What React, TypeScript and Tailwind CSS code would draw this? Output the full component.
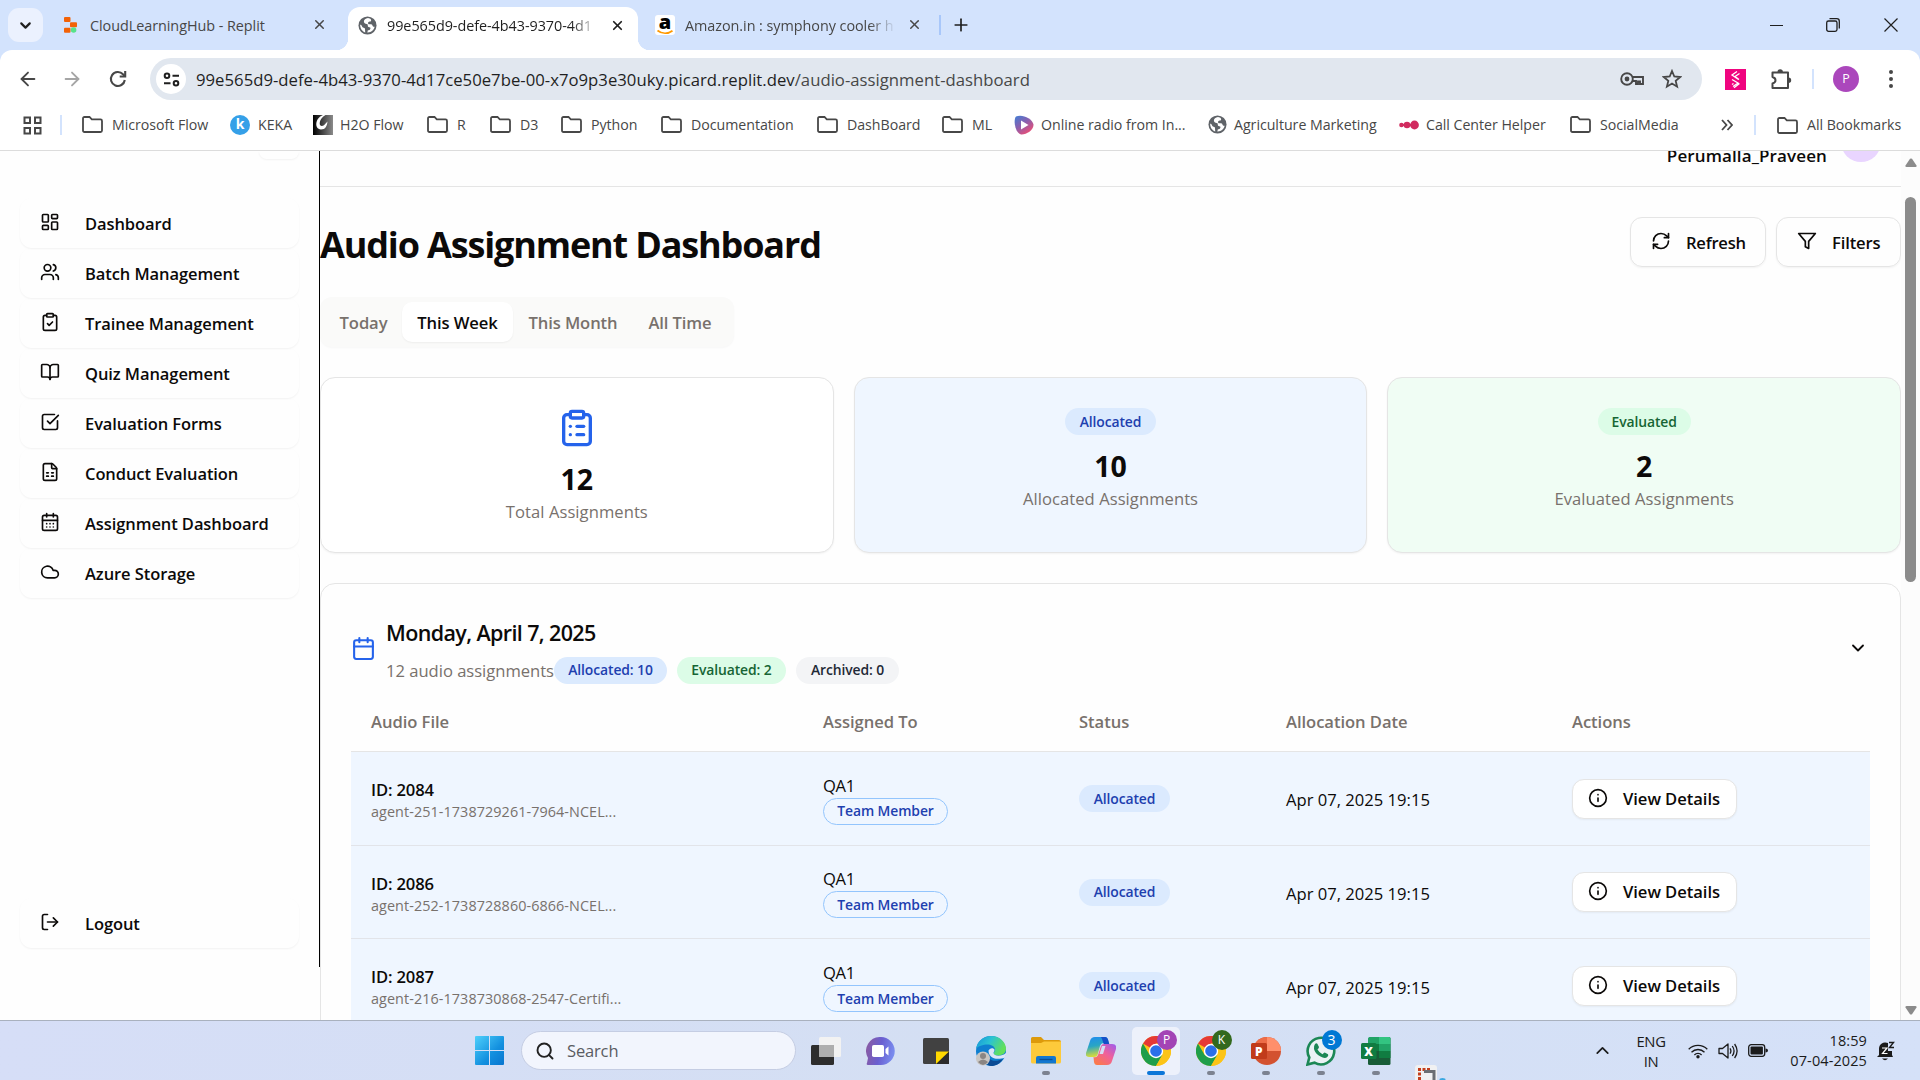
import type { ReactNode } from "react";
import {
  ArrowLeft, ArrowRight, BookOpen, Calendar, CalendarDays, ChevronDown, ChevronUp, ClipboardCheck,
  ClipboardList, Cloud, FileSpreadsheet, Info, LayoutDashboard, LogOut, Plus, RefreshCw,
  Search, SquareCheckBig, Users, X,
} from "lucide-react";

function Globe() {
  return (
    <svg viewBox="0 0 20 20" className="size-[19px] shrink-0">
      <circle cx="10" cy="10" r="9.5" fill="#5f6368" />
      <path d="M10.500 2.200c-2.600.3-4.300 1.700-4.300 3.700 0 1.800 1.400 2.400 2.900 2.500 1.200.1 1.300.8 1.200 1.700-.1 1 .5 1.700 1.600 1.700 1.300 0 1.500.9 1 1.900-.5 1.200-1.300 1.300-2.500 1.400l-.6 2.300c3.800.3 7-2.300 7.700-6-1.300.2-2-.3-2.300-1.400-.4-1.300-1.600-1.300-2.800-1.200-1.500.1-2.200-.8-1.700-2 .3-.8 1.400-.8 2.300-1 .9-.3 1-1.200.6-2.100-.7-.9-1.700-1.400-3.100-1.500zM2.300 9c-.3 3.800 1.900 7.100 5.300 8.400l-.2-3c.1-1.300-.4-1.800-1.500-2C4.800 12.200 4.200 11 3.900 10z" fill="#fff" />
    </svg>
  );
}

function Folder() {
  return (
    <svg viewBox="0 0 21 17" className="h-[17px] w-[21px] shrink-0" fill="none" stroke="#474747" strokeWidth="1.8">
      <path d="M1 14.500V2.500Q1 1 2.500 1H7.500L9.800 3.400H18.500Q20 3.400 20 4.900V14.500Q20 16 18.500 16H2.500Q1 16 1 14.500Z" />
    </svg>
  );
}

function Keka() {
  return (
    <span className="flex size-5 shrink-0 items-center justify-center rounded-full bg-[#35a0e8] pb-0.5 text-[14px] font-bold leading-none text-white">k</span>
  );
}

function H2O() {
  return (
    <svg viewBox="0 0 20 20" className="size-5 shrink-0">
      <defs>
        <linearGradient id="h2o" x1="0" x2="1"><stop offset="0" stopColor="#000" /><stop offset="1" stopColor="#8b8b8b" /></linearGradient>
      </defs>
      <rect width="20" height="20" fill="url(#h2o)" />
      <path d="M10 0C2 3 1 14 8 14.500c4.500 0 6-3.500 6.500-8C12 9 11 11 8.500 11 5.500 10.500 6 4 12.500 0z" fill="#fff" />
    </svg>
  );
}

function Radio() {
  return (
    <svg viewBox="0 0 20 20" className="size-5 shrink-0">
      <defs>
        <linearGradient id="radio" x1="0" y1="0" x2=".7" y2="1"><stop offset="0" stopColor="#3f7fd6" /><stop offset=".5" stopColor="#8b5fae" /><stop offset="1" stopColor="#ef4d72" /></linearGradient>
      </defs>
      <path d="M2 1.500C8-1 18 3 19.500 9.500 20 15 12 20 7 19.500 1 18-1 5 2 1.500z" fill="url(#radio)" />
      <path d="M7 5.500v9l7.500-4.500z" fill="#fff" />
    </svg>
  );
}

function CallDots() {
  return (
    <svg viewBox="0 0 20 10" className="h-2.5 w-5 shrink-0" fill="#d12b5f">
      <circle cx="2.500" cy="5" r="2.300" /><circle cx="8" cy="5" r="3.300" /><circle cx="15.500" cy="5" r="4.400" /><path d="M2 4h13v2H2z" />
    </svg>
  );
}

const bookmarks: { label: string; width: string; icon: ReactNode; gap?: string }[] = [
  { label: "Microsoft Flow", width: "w-[148px]", icon: <Folder /> },
  { label: "KEKA", width: "w-[83px]", icon: <Keka />, gap: "gap-2" },
  { label: "H2O Flow", width: "w-[114px]", icon: <H2O />, gap: "gap-[7px]" },
  { label: "R", width: "w-[63px]", icon: <Folder /> },
  { label: "D3", width: "w-[71px]", icon: <Folder /> },
  { label: "Python", width: "w-[100px]", icon: <Folder /> },
  { label: "Documentation", width: "w-[156px]", icon: <Folder /> },
  { label: "DashBoard", width: "w-[125px]", icon: <Folder /> },
  { label: "ML", width: "w-[72px]", icon: <Folder /> },
  { label: "Online radio from In...", width: "w-[194px]", icon: <Radio />, gap: "gap-[7px]" },
  { label: "Agriculture Marketing", width: "w-[191px]", icon: <Globe />, gap: "gap-[7px]" },
  { label: "Call Center Helper", width: "w-[171px]", icon: <CallDots />, gap: "gap-[7px]" },
  { label: "SocialMedia", width: "w-[151px]", icon: <Folder /> },
];

function TabStrip() {
  return (
    <div className="flex h-[50px] items-center bg-[#d3e3fd] text-[14.4px] tracking-[-0.05px] text-[#474747]">
      <div className="ml-2 flex h-[34px] w-[35px] items-center justify-center rounded-[11px] bg-[#ebf1fe]">
        <ChevronDown className="size-[17px] text-[#1f1f1f]" strokeWidth={3} />
      </div>
      <div className="flex w-[305px] items-center pl-[21px]">
        <svg viewBox="0 0 13 16" className="h-4 w-[13px] shrink-0">
          <rect width="6.500" height="5" rx="1" fill="#f26207" /><rect x="6" y="5.300" width="7" height="5" rx="1" fill="#f26207" />
          <rect y="10.800" width="6.500" height="5" rx="1" fill="#f26207" /><circle cx="9.600" cy="13" r="2.800" fill="#57e389" />
        </svg>
        <span className="ml-[13px] w-[222px] pt-px">CloudLearningHub - Replit</span>
        <X className="size-[15px]" strokeWidth={2.4} />
      </div>
      <div className="relative -mb-[7px] flex h-[43px] w-[290px] items-center rounded-t-[12px] bg-white pb-[7px] pl-2.5 text-[#1f1f1f] before:absolute before:bottom-0 before:-left-3 before:size-3 before:bg-[radial-gradient(circle_at_0_0,transparent_12px,white_12.500px)] after:absolute after:-right-3 after:bottom-0 after:size-3 after:bg-[radial-gradient(circle_at_100%_0,transparent_12px,white_12.500px)]">
        <Globe />
        <span className="ml-[10px] w-[209px] pt-px whitespace-nowrap [mask-image:linear-gradient(90deg,#000_88%,transparent_101%)]">99e565d9-defe-4b43-9370-4d1</span>
        <X className="ml-[14px] size-[15px]" strokeWidth={2.800} />
      </div>
      <div className="flex w-[301px] items-center pl-[17px]">
        <svg viewBox="0 0 20 20" className="size-5 shrink-0">
          <rect width="20" height="20" rx="3" fill="#fff" />
          <text x="3.800" y="13.800" fontSize="20" fontWeight="800" fontFamily="Open Sans" fill="#000">a</text>
          <path d="M2.500 15.500c4.500 3.600 10.500 3.600 15 .2" stroke="#ff9900" strokeWidth="1.700" fill="none" />
        </svg>
        <span className="ml-2.5 w-[209px] pt-px whitespace-nowrap [mask-image:linear-gradient(90deg,#000_88%,transparent_101%)]">Amazon.in : symphony cooler ho</span>
        <X className="ml-[13px] size-[15px]" strokeWidth={2.400} />
      </div>
      <div className="h-5 w-0.5 bg-[#a8c7fa]" />
      <Plus className="ml-[10px] size-[20px] text-[#1f1f1f]" />
      <div className="ml-auto flex items-center text-[#1f1f1f]">
        <svg viewBox="0 0 13 13" className="mr-[43px] size-[13px]" stroke="currentColor"><path d="M0 6.500h13" /></svg>
        <svg viewBox="0 0 14 14" className="mr-[44px] size-[14px]" stroke="currentColor" fill="none" strokeWidth="1.300"><rect x=".7" y="3" width="10.300" height="10.300" rx="1.800" /><path d="M3.500.7h7.300q2.500 0 2.500 2.500v7.300" /></svg>
        <svg viewBox="0 0 14 14" className="mr-[22px] size-[14px]" stroke="currentColor" strokeWidth="1.200"><path d="M.5.5l13 13M13.500.5l-13 13" /></svg>
      </div>
    </div>
  );
}

function Toolbar() {
  return (
    <div className="flex h-[58px] items-center rounded-t-[12px] bg-white text-[#474747]">
      <ArrowLeft className="ml-[17px] size-[22px]" strokeWidth={2} />
      <ArrowRight className="ml-[22px] size-[22px] text-[#a5a5a5]" strokeWidth={2} />
      <svg viewBox="0 0 18 18" className="ml-[26px] size-[18px]" fill="none" stroke="currentColor" strokeWidth="2.100">
        <path d="M15.800 10A7 7 0 1 1 14 4.200L16 6.200" /><path d="M16.200 1v5.500h-5.500" />
      </svg>
      <div className="ml-[23px] flex h-[42px] w-[1552px] items-center rounded-full bg-[#e1e7ef]">
        <div className="ml-[6px] flex size-[30px] items-center justify-center rounded-full bg-white">
          <svg viewBox="0 0 17 15" className="h-[15px] w-[17px]" fill="none" stroke="#1f1f1f" strokeWidth="2"><circle cx="4" cy="3.800" r="2.300" /><path d="M9.500 3.800H16M1 11.200h6.500" /><circle cx="13" cy="11.200" r="2.300" /></svg>
        </div>
        <div className="ml-2.5 pt-px text-[16.700px] tracking-[0.018px] whitespace-nowrap text-[#1f1f1f]">99e565d9-defe-4b43-9370-4d17ce50e7be-00-x7o9p3e30uky.picard.replit.dev<span className="text-[#474747]">/audio-assignment-dashboard</span></div>
        <svg viewBox="0 0 24 14" className="ml-auto h-[14px] w-[24px]" fill="none" stroke="currentColor" strokeWidth="1.900"><circle cx="7" cy="7" r="5.800" /><circle cx="7" cy="7" r="2.400" fill="currentColor" stroke="none" /><path d="M12.500 5H23v7h-3V9.500h-2V12h-2V9h-3.500" /></svg>
        <svg viewBox="0 0 20 20" className="mr-5 ml-[18px] size-[20px]" fill="none" stroke="currentColor" strokeWidth="1.800"><path d="M10 2l2.300 5.500 5.900.5-4.500 3.900 1.400 5.800L10 14.600l-5.100 3.100 1.400-5.800L1.800 8l5.900-.5z" /></svg>
      </div>
      <svg viewBox="0 0 21 21" className="ml-[23px] size-[21px]">
        <rect width="21" height="21" fill="#f0047f" />
        <path d="M12 2.500L7 6l6.500 4.500M14.500 4.500L10 7.500l4 3M7 10.500l6 3.500-5 3.500M10.500 10.500M8.500 14.500L7 15.500M14.500 14.500L9 18.800" stroke="#fff" strokeWidth="1.300" fill="none" />
      </svg>
      <svg viewBox="0 0 22 22" className="ml-[24px] size-[22px]" fill="none" stroke="currentColor" strokeWidth="2">
        <path d="M2.500 4.500H18V20H2.500V15.500Q5.500 14.500 5.500 12.200T2.500 9z" strokeLinejoin="round" /><path d="M7.500 4h5.400a2.700 2.700 0 0 0-5.400 0zM18.500 9.500v5.400a2.700 2.700 0 0 0 0-5.400z" fill="currentColor" stroke="none" />
      </svg>
      <div className="ml-[20px] h-5 w-0.5 bg-[#d3e3fd]" />
      <div className="ml-[19px] flex size-[26px] items-center justify-center rounded-full bg-[#ab47bc] text-[12.500px] text-white">P</div>
      <svg viewBox="0 0 4 18" className="ml-[30px] h-[18px] w-1" fill="currentColor"><circle cx="2" cy="2" r="2" /><circle cx="2" cy="9" r="2" /><circle cx="2" cy="16" r="2" /></svg>
    </div>
  );
}

function Bookmarks() {
  return (
    <div className="flex h-[43px] items-center border-b border-[#dcdcdc] bg-white pb-[8px] text-[14.200px] tracking-[-0.03px] whitespace-nowrap text-[#474747]">
      <svg viewBox="0 0 19 19" className="ml-[23px] size-[19px]" fill="none" stroke="currentColor" strokeWidth="2"><path d="M1.500 1.500h5.500v5.500H1.500zM12 1.500h5.500v5.500H12zM1.500 12h5.500v5.500H1.500zM12 12h5.500v5.500H12z" /></svg>
      <div className="mr-[20px] ml-[18px] h-5 w-0.5 bg-[#d3e3fd]" />
      {bookmarks.map((b) => (
        <div key={b.label} className={`flex shrink-0 items-center ${b.width} ${b.gap ?? "gap-[9px]"}`}>
          {b.icon}
          <span>{b.label}</span>
        </div>
      ))}
      <svg viewBox="0 0 12 12" className="size-3" fill="none" stroke="currentColor" strokeWidth="1.800"><path d="M1 1l4.500 5L1 11M6.500 1L11 6l-4.500 5" /></svg>
      <div className="mr-[21px] ml-[21px] h-5 w-0.5 bg-[#d3e3fd]" />
      <Folder />
      <span className="ml-[9px]">All Bookmarks</span>
    </div>
  );
}

const nav = [
  { label: "Dashboard", Icon: LayoutDashboard },
  { label: "Batch Management", Icon: Users },
  { label: "Trainee Management", Icon: ClipboardCheck },
  { label: "Quiz Management", Icon: BookOpen },
  { label: "Evaluation Forms", Icon: SquareCheckBig },
  { label: "Conduct Evaluation", Icon: FileSpreadsheet },
  { label: "Assignment Dashboard", Icon: CalendarDays },
  { label: "Azure Storage", Icon: Cloud },
];

function NavItem({ label, Icon }: { label: string; Icon: typeof Cloud }) {
  return (
    <div className="flex h-[50px] items-center rounded-[12px] pl-5 shadow-[0_1px_2px_rgba(0,0,0,0.05)]">
      <Icon className="mb-[2px] size-5" strokeWidth={2} />
      <span className="ml-[25px] pt-[3px] text-[16.500px] font-semibold tracking-[-0.08px]">{label}</span>
    </div>
  );
}

function Sidebar() {
  return (
    <aside className="flex h-[816px] w-[320px] shrink-0 flex-col border-r border-black px-5">
      <div className="h-[8px] w-10 self-end rounded-b-[12px] shadow-[0_1px_2px_rgba(0,0,0,0.05)]" />
      <nav className="mt-[39px]">
        {nav.map((n) => <NavItem key={n.label} {...n} />)}
      </nav>
      <div className="mt-auto mb-[19px]"><NavItem label="Logout" Icon={LogOut} /></div>
    </aside>
  );
}

function Badge({ children, className }: { children: ReactNode; className: string }) {
  return <span className={`inline-flex h-[27px] items-center justify-center rounded-full border pt-px text-[13.900px] font-semibold tracking-[-0.1px] whitespace-nowrap ${className}`}>{children}</span>;
}

function StatCard({ top, value, label, className }: { top: ReactNode; value: string; label: string; className: string }) {
  return (
    <div className={`flex h-[176px] flex-1 flex-col items-center rounded-[15px] border border-[#e5e5e5] pt-[30px] shadow-[0_1px_2px_rgba(0,0,0,0.05)] ${className}`}>
      {top}
      <div className="mt-[11px] text-[28.500px] leading-10 font-bold">{value}</div>
      <div className="text-[16.600px] leading-[25px] tracking-[0.05px] text-[#78716c]">{label}</div>
    </div>
  );
}

const rows = [
  { id: "2084", file: "agent-251-1738729261-7964-NCEL..." },
  { id: "2086", file: "agent-252-1738728860-6866-NCEL..." },
  { id: "2087", file: "agent-216-1738730868-2547-Certifi..." },
];

const cols = "grid grid-cols-[452px_256px_207px_286px_1fr] pl-5";

function AssignmentsCard() {
  return (
    <section className="mt-[30px] h-[600px] rounded-[15px] border border-[#e5e5e5] px-[30px] pt-[30px]">
      <div className="flex h-[68px] items-center">
        <Calendar className="size-[25px] text-[#2563eb]" />
        <div className="ml-[10px] pt-[2px]">
          <h3 className="text-[21.500px] leading-[36px] font-semibold tracking-[-0.62px]">Monday, April 7, 2025</h3>
          <div className="mt-[6px] flex items-center">
            <span className="w-[168px] text-[16.600px] leading-[27px] tracking-[-0.02px] whitespace-nowrap text-[#78716c]">12 audio assignments</span>
            <Badge className="w-[113px] border-transparent bg-[#dbeafe] text-[#1e40af]">Allocated: 10</Badge>
            <Badge className="ml-2.5 w-[109px] border-transparent bg-[#dcfce7] text-[#166534]">Evaluated: 2</Badge>
            <Badge className="ml-2.5 w-[103px] border-transparent bg-[#f3f4f6] text-[#1f2937]">Archived: 0</Badge>
          </div>
        </div>
        <ChevronDown className="mr-[2px] ml-auto size-5" strokeWidth={2.200} />
      </div>
      <div className={`${cols} mt-[9px] h-[61px] items-center border-b border-[#e5e5e5] pt-[2px] text-[16.600px] font-semibold tracking-[-0.05px] text-[#78716c]`}>
        <span>Audio File</span><span>Assigned To</span><span>Status</span><span>Allocation Date</span><span>Actions</span>
      </div>
      {rows.map((r) => (
        <div key={r.id} className={`${cols} h-[93.600px] items-center border-b border-[#e2e4e9] bg-[#eff6ff]`}>
          <div className="pt-[3px]">
            <div className="text-[16.600px] leading-[25px] font-semibold tracking-[-0.15px]">ID: {r.id}</div>
            <div className="text-[14.400px] leading-5 tracking-[0.07px] text-[#78716c]">{r.file}</div>
          </div>
          <div className="pt-px">
            <div className="text-[16.600px] leading-[25px] tracking-[-0.3px]">QA1</div>
            <Badge className="w-[125px] border-[#93c5fd] text-[#1e40af]">Team Member</Badge>
          </div>
          <div className="flex pt-px"><Badge className="w-[91px] border-transparent bg-[#dbeafe] text-[#1e40af]">Allocated</Badge></div>
          <div className="pt-[5px] text-[16.600px]">Apr 07, 2025 19:15</div>
          <div className="mt-px flex h-10 w-[165px] items-center rounded-[12px] border border-[#e5e5e5] bg-white pl-[15px] shadow-[0_1px_2px_rgba(0,0,0,0.05)]">
            <Info className="mb-0.5 size-5" strokeWidth={2} />
            <span className="ml-[15px] pt-px text-[16.600px] font-semibold tracking-[-0.05px] whitespace-nowrap">View Details</span>
          </div>
        </div>
      ))}
    </section>
  );
}

function Main() {
  return (
    <main className="h-[869px] w-[1581px] shrink-0 overflow-hidden">
      <div className="flex h-9 justify-end border-b border-[#e5e5e5]">
        <span className="-mt-[7px] text-[17px] leading-6 font-semibold tracking-[0.12px]">Perumalla_Praveen</span>
        <span className="-mt-[29px] mr-[20px] ml-[14px] size-10 rounded-full bg-[#e9d5ff]" />
      </div>
      <div className="mt-[30px] flex h-[50px] items-center gap-2.5">
        <h1 className="mr-auto pt-[6px] text-[36px] font-bold tracking-[-1.150px] whitespace-nowrap">Audio Assignment Dashboard</h1>
        <div className="flex h-[50px] w-[136px] items-center rounded-[12px] border border-[#e5e5e5] pl-[20px] shadow-[0_1px_2px_rgba(0,0,0,0.05)]">
          <RefreshCw className="mb-0.5 size-5" /><span className="ml-[15px] pt-[2px] text-[16.600px] font-semibold tracking-[-0.25px]">Refresh</span>
        </div>
        <div className="flex h-[50px] w-[125px] items-center rounded-[12px] border border-[#e5e5e5] pl-[20px] shadow-[0_1px_2px_rgba(0,0,0,0.05)]">
          <svg viewBox="0 0 24 24" className="mb-[3px] size-5" fill="none" stroke="currentColor" strokeWidth="2" strokeLinejoin="round"><path d="M22 3H2l8 9.460V19l4 2v-8.540z" /></svg>
          <span className="ml-[15px] pt-[2px] text-[16.600px] font-semibold tracking-[-0.15px]">Filters</span>
        </div>
      </div>
      <div className="mt-[30px] flex h-[50px] w-[414px] items-center rounded-[12px] bg-[#fafaf9] p-[5px] text-[16.600px] font-semibold tracking-[-0.1px] whitespace-nowrap text-[#78716c] shadow-[0_1px_2px_rgba(0,0,0,0.03)]">
        <span className="w-[77px] pt-[2px] text-center">Today</span>
        <span className="h-10 w-[111px] rounded-[10px] bg-white text-center leading-[42px] text-[#0c0a09] shadow-[0_1px_2px_rgba(0,0,0,0.05)]">This Week</span>
        <span className="w-[120px] pt-[2px] text-center">This Month</span>
        <span className="w-[94px] pt-[2px] text-center">All Time</span>
      </div>
      <div className="mt-[30px] flex gap-5">
        <StatCard className="bg-white" top={<ClipboardList className="size-10 text-[#2563eb]" />} value="12" label="Total Assignments" />
        <StatCard className="bg-[#eff6ff]" top={<Badge className="w-[91px] border-transparent bg-[#dbeafe] text-[#1e40af]">Allocated</Badge>} value="10" label="Allocated Assignments" />
        <StatCard className="bg-[#f0fdf4]" top={<Badge className="w-[93px] border-transparent bg-[#dcfce7] text-[#166534]">Evaluated</Badge>} value="2" label="Evaluated Assignments" />
      </div>
      <AssignmentsCard />
    </main>
  );
}

function Scrollbar() {
  return (
    <div className="flex h-[869px] w-[19px] flex-col items-center bg-[#fcfcfc]">
      <svg viewBox="0 0 12 9" className="mt-[7px] h-[9px] w-3" fill="#8b8b8b"><path d="M5 .8Q6 0 7 .8L11.500 7.500Q12 9 10.500 9h-9Q0 9 .5 7.500z" /></svg>
      <div className="mt-[30px] h-[385px] w-[11px] rounded-full bg-[#8b8b8b]" />
      <svg viewBox="0 0 12 9" className="mt-auto mb-[5px] h-[9px] w-3" fill="#8b8b8b"><path d="M5 8.200Q6 9 7 8.200L11.500 1.500Q12 0 10.500 0h-9Q0 0 .5 1.500z" /></svg>
    </div>
  );
}

function TaskCell({ children, run, active, note }: { children: ReactNode; run?: boolean; active?: boolean; note?: ReactNode }) {
  return (
    <div className="flex w-[55px] justify-center">
      <div className={`relative flex h-12 w-12 items-center justify-center rounded-[5px] ${active ? "bg-[#edf1fb]" : ""}`}>
        {children}
        {note}
        {run && <span className={`absolute bottom-0 h-1 rounded-full ${active ? "w-[18px] bg-[#0b76d8]" : "w-2 bg-[#7c8290]"}`} />}
      </div>
    </div>
  );
}

function ChromeLogo() {
  return (
    <svg viewBox="0 0 30 30" className="size-[30px]">
      <circle cx="15" cy="15" r="15" fill="#fcc417" />
      <path d="M15 15L2 7.500A15 15 0 0 1 28 7.500H15z" fill="#e53935" />
      <path d="M2 7.500A15 15 0 0 0 15 30L21.500 18.700 15 22 8.500 18.700z" fill="#1e9e4a" />
      <path d="M28 7.500H15L21.500 18.700 15 30A15 15 0 0 0 28 7.500z" fill="#fcc417" />
      <circle cx="15" cy="15" r="7.200" fill="#fff" /><circle cx="15" cy="15" r="5.800" fill="#2b6fe8" />
    </svg>
  );
}

function Taskbar() {
  return (
    <div className="flex h-[60px] items-center border-t border-[#a9b1be] bg-linear-to-r from-[#d6def7] via-[#d4dff3] to-[#d5e1f8] text-[#1b1b1b]">
      <svg viewBox="0 0 29 29" className="ml-[475px] size-[29px]">
        <defs><linearGradient id="win" x1="0" y1="0" x2="1" y2="1"><stop offset="0" stopColor="#4fd0fb" /><stop offset=".6" stopColor="#1390df" /><stop offset="1" stopColor="#0875cf" /></linearGradient></defs>
        <path d="M1 0H14V14H0V1Q0 0 1 0zM15 0H28Q29 0 29 1V14H15zM0 15H14V29H1Q0 29 0 28zM15 15H29V28Q29 29 28 29H15z" fill="url(#win)" />
      </svg>
      <div className="ml-[17px] flex h-[39px] w-[275px] items-center rounded-full border border-[#c5cde3] bg-[#f2f5fd]">
        <Search className="ml-[13px] size-[20px] text-[#222]" strokeWidth={2.300} />
        <span className="ml-[12px] pt-px text-[16.500px] tracking-[-0.15px] text-[#5a5c62]">Search</span>
      </div>
      <div className="ml-[2px] flex items-center">
        <TaskCell>
          <svg viewBox="0 0 30 28" className="h-7 w-[30px]"><rect y="8" width="23" height="20" rx="1.500" fill="#2d2d2d" /><rect x="8" width="22" height="20" rx="1.500" fill="#f2f2f2" /><path d="M8 8H23V20H9.500Q8 20 8 18.500z" fill="#aeaeae" /></svg>
        </TaskCell>
        <TaskCell>
          <svg viewBox="0 0 29 28" className="h-7 w-[29px]"><defs><linearGradient id="chat" x1="0" y1=".3" x2="1" y2=".5"><stop offset="0" stopColor="#8a5ba3" /><stop offset=".5" stopColor="#6a5fd0" /><stop offset="1" stopColor="#7a8ef0" /></linearGradient></defs>
            <path d="M14.500 0A14 14 0 0 1 15 28H2Q0 28 1 26L2 21A14 14 0 0 1 14.500 0z" fill="url(#chat)" /><rect x="6" y="8" width="12" height="12" rx="1.800" fill="#fff" /><path d="M19.500 12l3-2.500v9l-3-2.500z" fill="#fff" /></svg>
        </TaskCell>
        <TaskCell>
          <svg viewBox="0 0 26 26" className="size-[26px]"><rect width="26" height="26" rx="1.500" fill="#414141" /><path d="M13 13.500H26V26H13z" fill="#2b2b2b" /><path d="M13 13.500H26L13 26z" fill="#ffd800" /></svg>
        </TaskCell>
        <TaskCell>
          <svg viewBox="0 0 30 30" className="size-[30px]"><defs><linearGradient id="edge" x1="0" y1="0" x2="1" y2=".4"><stop offset="0" stopColor="#1593dc" /><stop offset=".5" stopColor="#2bc3d2" /><stop offset="1" stopColor="#62e05a" /></linearGradient></defs>
            <circle cx="15" cy="15" r="15" fill="#0f7fd0" /><path d="M0 13C1 5 8 0 15 0c9 0 15 6.500 15 12.500 0 5-4 7-8 7-3 0-4.500-1-4.500-2 0-1 1.500-1.500 1.500-4 0-2.500-3-5-7.500-5S2 10 0 13z" fill="url(#edge)" /><path d="M11 17c0 7 7 10 16 6-3 4.500-7 7-12 7-6-1-8-6-7-10z" fill="#0a4a94" /><path d="M12.500 14.500c0 6 5 9.500 13 8l3-.5q2-3 1.500-5c-4 3.500-12 3.500-12.500 0 0-1 1-1.500 1-3.500-2-2.500-5-1-6 1z" fill="#dce5f8" />
            <circle cx="7" cy="22.500" r="7" fill="#c9c6c3" /><circle cx="7" cy="20" r="3" fill="#8a8583" /><path d="M2 26q5-5 10 0-5 6-10 0z" fill="#8a8583" /></svg>
        </TaskCell>
        <TaskCell run>
          <svg viewBox="0 0 30 27" className="h-[27px] w-[30px]"><path d="M0 1.500Q0 0 1.500 0H10L13 3H28Q30 3 30 5V10H0z" fill="#dd9a0b" /><path d="M0 6H10L13 4.500H30V25Q30 26.500 28 26.500H2Q0 26.500 0 25z" fill="#fdca3b" /><path d="M5 26.500V21Q5 19 7 19H23Q25 19 25 21V26.500z" fill="#1277cf" /><path d="M8.500 22.500H21.500" stroke="#0a4e94" strokeWidth="1.300" /></svg>
        </TaskCell>
        <TaskCell>
          <svg viewBox="0 0 30 28" className="h-7 w-[30px]"><defs><linearGradient id="cpa" x1="0" y1="0" x2=".2" y2="1"><stop offset="0" stopColor="#1f8bf0" /><stop offset=".5" stopColor="#29a6c4" /><stop offset="1" stopColor="#d8dc3a" /></linearGradient><linearGradient id="cpb" x1="1" y1="0" x2=".2" y2="1"><stop offset="0" stopColor="#9b5cf0" /><stop offset=".5" stopColor="#f0619a" /><stop offset="1" stopColor="#fb7a4a" /></linearGradient></defs>
            <path d="M9 0H19Q21.500 0 22 3L22.500 6H18Q15 6 14 9L11.500 18Q11 20 8 20H3Q-1 20 0 16L4 4Q5 0 9 0z" fill="url(#cpa)" /><path d="M15 0H19Q21.500 0 22.500 4L23.500 8H18L16 2z" fill="#1450c8" /><path d="M21 28H11Q8.500 28 8 25L7.500 20Q11 21 12 18L15 9Q16 6.500 19 7H26Q31 7 30 12L26 24Q25 28 21 28z" fill="url(#cpb)" /><path d="M13.500 17L16 9h3.500L17 17z" fill="#d5def5" /></svg>
        </TaskCell>
        <TaskCell run active note={<span className="absolute top-[3px] right-[3px] flex size-5 items-center justify-center rounded-full bg-[#a344b5] text-[12px] text-white">P</span>}><ChromeLogo /></TaskCell>
        <TaskCell run note={<span className="absolute top-[3px] right-[3px] flex size-5 items-center justify-center rounded-full bg-[#33691e] text-[12px] font-medium text-white">K</span>}><ChromeLogo /></TaskCell>
        <TaskCell run>
          <svg viewBox="0 0 30 28" className="h-7 w-[30px]"><circle cx="16" cy="14" r="14" fill="#d35230" /><path d="M16 0A14 14 0 0 1 30 14H16z" fill="#ff8f6b" /><path d="M16 0A14 14 0 0 0 2 14H16z" fill="#ed6c47" /><rect y="6" width="16" height="16" rx="1.500" fill="#c13b1b" /><text x="4" y="18.500" fontSize="12" fontWeight="800" fontFamily="Open Sans" fill="#fff">P</text></svg>
        </TaskCell>
        <TaskCell run note={<span className="absolute top-[3px] right-[3px] flex size-5 items-center justify-center rounded-full bg-[#0078d4] text-[14px] text-white">3</span>}>
          <svg viewBox="0 0 30 30" className="size-[30px]"><path d="M1.500 28.500L3.300 21.500A13.300 13.300 0 1 1 8.500 26.700z" fill="#eaf2f5" stroke="#1b8755" strokeWidth="2.600" /><path d="M9 8q1.500-1.500 2.500 0l1.500 3q0 1-1.500 2.500 2 3.500 5 4.800 1.500-1.800 2.200-1.800l3.300 1.700q.8 1-.5 2.500-2.500 2.500-7-.2Q9 17.500 8 13q-.500-3 1-5z" fill="#1b8755" /></svg>
        </TaskCell>
        <TaskCell run>
          <svg viewBox="0 0 30 28" className="h-7 w-[30px]"><path d="M9 0H28Q29.500 0 29.500 1.500V26.500Q29.500 28 28 28H8.500Q7 28 7 26.500V2z" fill="#185c37" /><path d="M7 2Q7 0 9 0H18V7H7z" fill="#21a366" /><path d="M18 0H28Q29.500 0 29.500 1.500V7H18z" fill="#33c481" /><path d="M7 7H18V14H7z" fill="#107c41" /><path d="M18 7H29.500V14H18z" fill="#21a366" /><path d="M18 14H29.500V21H18z" fill="#107c41" /><rect y="6" width="15.500" height="16" rx="1.500" fill="#107c41" /><text x="3.300" y="18.500" fontSize="12" fontWeight="800" fontFamily="Open Sans" fill="#fff">X</text></svg>
        </TaskCell>
      </div>
      <svg viewBox="0 0 32 15" className="ml-[12px] h-[15px] w-8 self-end">
        <path d="M0 15V3Q0 0 3 0H19Q22 0 22 3V15z" fill="#f1f1f2" /><path d="M4.500 15V4.500H15" stroke="#c43e1c" strokeWidth="3" strokeDasharray="3 1.500" fill="none" /><path d="M9 6.500H19V15" stroke="#6b6e73" strokeWidth="3" fill="none" /><ellipse cx="27.500" cy="14.500" rx="3" ry="1.500" fill="#3aa7e0" />
      </svg>
      <ChevronUp className="ml-auto size-[21px]" strokeWidth={2} />
      <div className="ml-[16px] w-[44px] text-center text-[14.800px] leading-5 tracking-[-0.3px]">ENG<br />IN</div>
      <svg viewBox="0 0 20 16" className="ml-[15px] h-4 w-5" fill="none" stroke="currentColor" strokeWidth="1.300"><path d="M.7 6.300a13 13 0 0 1 18.600 0M3.500 9.300a9 9 0 0 1 13 0M6.400 12a5 5 0 0 1 7.200 0" /><circle cx="10" cy="13.800" r="1.700" fill="currentColor" stroke="none" /></svg>
      <svg viewBox="0 0 20 18" className="ml-[10px] h-[18px] w-5" fill="none" stroke="currentColor" strokeWidth="1.300"><path d="M1 6.500h3.500L10 2v14l-5.500-4.500H1z" strokeLinejoin="round" /><path d="M12 6.300q1.800 2.700 0 5.400M14.300 4q3.500 5 0 10M16.600 2q5 7 0 14" /></svg>
      <svg viewBox="0 0 20 13" className="ml-[10px] h-[13px] w-5"><rect x=".7" y=".7" width="16" height="11.600" rx="2.500" fill="none" stroke="currentColor" strokeWidth="1.300" /><rect x="2.500" y="2.500" width="12.400" height="8" rx="1" fill="currentColor" /><path d="M17.500 4.500q2.500 0 2.500 2t-2.500 2z" fill="currentColor" /></svg>
      <div className="ml-[18px] w-[81px] text-right text-[14.500px] leading-[20px] tracking-[0.1px] whitespace-nowrap">18:59<br />07-04-2025</div>
      <svg viewBox="0 0 18 20" className="mr-[25px] ml-[10px] h-5 w-[18px]"><path d="M2 14V8a6.300 6.300 0 0 1 9-6v8h4v4l1 2H0z" fill="currentColor" /><path d="M5 17.500h6q-3 3.500-6 0z" fill="currentColor" /><path d="M5 7h5L5.500 12.500h5" stroke="#fff" strokeWidth="1.200" fill="none" /><path d="M12 1.500h4.500L12.500 6.500h4.500" stroke="currentColor" strokeWidth="1.400" fill="none" /></svg>
    </div>
  );
}

export default function App() {
  return (
    <div className="flex h-[1080px] w-[1920px] flex-col overflow-hidden bg-white font-['Open_Sans','Noto_Sans',sans-serif] text-[#0c0a09]">
      <div className="bg-[#d3e3fd]"><TabStrip /><Toolbar /></div>
      <Bookmarks />
      <div className="flex h-[869px] bg-[#fefefe]">
        <Sidebar />
        <Main />
        <Scrollbar />
      </div>
      <Taskbar />
    </div>
  );
}
